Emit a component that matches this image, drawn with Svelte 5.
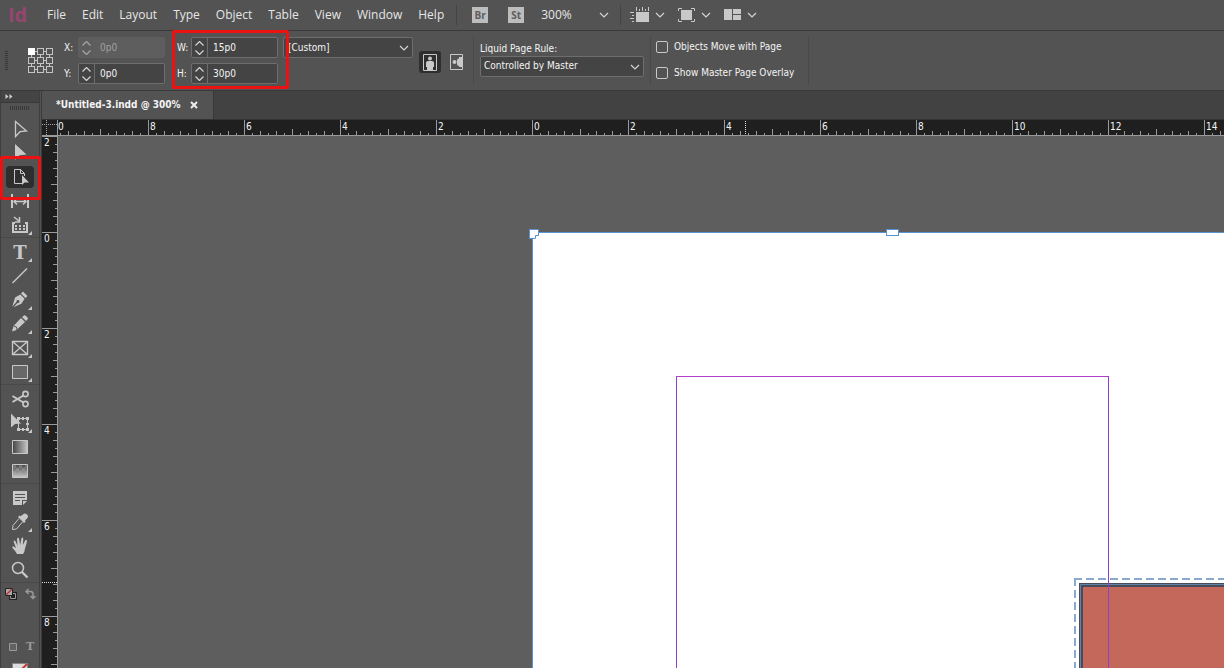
<script>
  const menus = ['File', 'Edit', 'Layout', 'Type', 'Object', 'Table', 'View', 'Window', 'Help'];
  const toolGroups = [
    [
      { id: 'select', name: 'Selection Tool' },
      { id: 'direct', name: 'Direct Selection Tool' },
      { id: 'page', name: 'Page Tool' },
      { id: 'gap', name: 'Gap Tool' },
      { id: 'collect', name: 'Content Collector Tool', more: true }
    ],
    [
      { id: 'type', name: 'Type Tool', more: true },
      { id: 'line', name: 'Line Tool' },
      { id: 'pen', name: 'Pen Tool', more: true },
      { id: 'pencil', name: 'Pencil Tool', more: true },
      { id: 'frame', name: 'Rectangle Frame Tool', more: true },
      { id: 'rect', name: 'Rectangle Tool', more: true }
    ],
    [
      { id: 'scissors', name: 'Scissors Tool' },
      { id: 'transform', name: 'Free Transform Tool', more: true },
      { id: 'gradient', name: 'Gradient Swatch Tool' },
      { id: 'feather', name: 'Gradient Feather Tool' }
    ],
    [
      { id: 'note', name: 'Note Tool' },
      { id: 'dropper', name: 'Eyedropper Tool', more: true },
      { id: 'hand', name: 'Hand Tool' },
      { id: 'zoom', name: 'Zoom Tool' }
    ]
  ];
  let active = $state('page');
  let objectsMove = $state(false);
  let overlay = $state(false);
  let winW = $state(1224);
  let winH = $state(668);

  // Ruler: one labelled mark every two picas, only as many as the window shows.
  const step = 96;
  const across = $derived(Array.from({ length: Math.ceil((winW - 148) / step) }, (_, i) => ({ at: 90 + i * step, label: Math.abs(i - 4) * 2 })));
  const down = $derived(Array.from({ length: Math.ceil((winH - 136) / step) }, (_, i) => ({ at: i * step, label: Math.abs(i - 1) * 2 })));
  const ticks = Array.from({ length: 11 }, (_, i) => ({ at: (i + 1) * 8, size: i === 5 ? 6 : i % 2 ? 4 : 2 }));
  const checks = Array.from({ length: 15 }, (_, i) => ({ x: i % 5, y: Math.floor(i / 5) })).filter((c) => (c.x + c.y) % 2 === 0);
</script>

<svelte:window bind:innerWidth={winW} bind:innerHeight={winH} />

{#snippet chevron()}
  <svg class="chev" width="10" height="6" viewBox="0 0 10 6" aria-hidden="true"><path d="M1 1l4 4 4-4" /></svg>
{/snippet}

{#snippet measure(id, label, value, off)}
  <div class="measure">
    <label for={id}>{label}:</label>
    <div class="box" class:off>
      <div class="spin">
        <button aria-label="Increase {label}" disabled={off}><svg width="9" height="5" viewBox="0 0 9 5"><path d="M.5 4.5l4-4 4 4" /></svg></button>
        <button aria-label="Decrease {label}" disabled={off}><svg width="9" height="5" viewBox="0 0 9 5"><path d="M.5 .5l4 4 4-4" /></svg></button>
      </div>
      <input {id} type="text" {value} disabled={off} />
    </div>
  </div>
{/snippet}

<div class="app">
  <header class="menubar">
    <span class="logo">Id</span>
    <nav>
      {#each menus as m}<button>{m}</button>{/each}
    </nav>
    <span class="rule"></span>
    <button class="badge">Br</button>
    <button class="badge">St</button>
    <button class="zoom"><span>300%</span>{@render chevron()}</button>
    <span class="rule"></span>
    <button class="view" aria-label="View options">
      <svg width="19" height="16" viewBox="0 0 19 16"><path fill="#c8c8c8" d="M6 5h13v10H6z" /><path stroke="#c8c8c8" d="M6.5 0v4M9.5 2v2M12.500 0v4M15.500 2v2M18.500 0v4M0 5.500h4M2 8.500h2M0 11.500h4M2 14.500h2" /></svg>
      {@render chevron()}
    </button>
    <button class="view" aria-label="Screen mode">
      <svg width="17" height="16" viewBox="0 0 17 16"><path fill="#c8c8c8" d="M3 3h11v10H3z" /><path fill="none" stroke="#c8c8c8" d="M.5 4V1.500H4M13 1.500h3.500V4M16.500 12v2.500H13M4 14.500H.5V12" /></svg>
      {@render chevron()}
    </button>
    <button class="view" aria-label="Arrange documents">
      <svg width="17" height="16" viewBox="0 0 17 16"><path fill="#c8c8c8" d="M0 2h8v11H0zM9 2h8v5H9zM9 8h8v5H9z" /></svg>
      {@render chevron()}
    </button>
  </header>

  <section class="control" aria-label="Control panel">
    <span class="grip"></span>
    <svg class="anchor" width="26" height="26" viewBox="0 0 26 26" role="img" aria-label="Reference point">
      <path d="M3.500 3.500h18v18h-18zM3.500 12.500h18M12.500 3.500v18" fill="none" stroke="#c4c4c4" />
      {#each [0, 9, 18] as y}{#each [0, 9, 18] as x}
        <rect x={x + 0.5} y={y + 0.5} width="6" height="6" fill={x + y === 0 ? '#fff' : '#535353'} stroke={x + y === 0 ? '#fff' : '#c4c4c4'} />
      {/each}{/each}
    </svg>
    <div class="pair">
      {@render measure('fx', 'X', '0p0', true)}
      {@render measure('fy', 'Y', '0p0', false)}
    </div>
    <div class="pair size">
      {@render measure('fw', 'W', '15p0', false)}
      {@render measure('fh', 'H', '30p0', false)}
      <span class="mark mark-size"></span>
    </div>
    <div class="pick preset">
      <select aria-label="Page size"><option>[Custom]</option></select>
      {@render chevron()}
    </div>
    <div class="orient">
      <button class="on" aria-label="Portrait">
        <svg width="14" height="17" viewBox="0 0 14 17"><path fill="none" stroke="#c8c8c8" d="M.5.5h13v16H.5z" /><circle cx="7" cy="4.500" r="2" fill="#c8c8c8" /><path fill="#c8c8c8" d="M3 9q0-2 2-2h4q2 0 2 2v4h-1v3H4v-3H3z" /></svg>
      </button>
      <button aria-label="Landscape">
        <svg width="14" height="17" viewBox="0 0 14 17"><path fill="none" stroke="#c8c8c8" d="M.5.5h12v15H.5z" /><circle cx="4.500" cy="8" r="2" fill="#c8c8c8" /><path fill="#c8c8c8" d="M13 3v10H9v-1q-2 0-2-2V6.500q0-2 2-2V3z" /></svg>
      </button>
    </div>
    <span class="rule tall"></span>
    <div class="liquid">
      <label for="liquid">Liquid Page Rule:</label>
      <div class="pick">
        <select id="liquid"><option>Controlled by Master</option></select>
        {@render chevron()}
      </div>
    </div>
    <span class="rule tall"></span>
    <div class="options">
      <label><input type="checkbox" bind:checked={objectsMove} />Objects Move with Page</label>
      <label><input type="checkbox" bind:checked={overlay} />Show Master Page Overlay</label>
    </div>
    <span class="rule tall"></span>
  </section>

  <div class="work">
    <aside class="tools">
      <button class="expand" aria-label="Expand tools"><svg width="8" height="6" viewBox="0 0 8 6"><path d="M.5 0l3 2.500-3 2.500zM4.500 0l3 2.500-3 2.500z" fill="#d0d0d0" /></svg></button>
      <span class="handle"></span>
      {#each toolGroups as group}
        <div class="group">
          {#each group as t}
            <button class="tool" class:active={active === t.id} aria-label={t.name} onclick={() => (active = t.id)}>
              <svg width="28" height="24" viewBox="0 0 28 24">
                {#if t.id === 'select'}
                  <path class="s" stroke-width="1.300" d="M9.500 4.500v15l4.500-4.800 6.500-.7z" />
                {:else if t.id === 'direct'}
                  <path d="M9 3v16l4.500-4.800 7-.7z" />
                {:else if t.id === 'page'}
                  <path class="s" d="M16 18.500H8.500v-14h6l4 4V11M14.500 4.500v4h4" /><path d="M16 10v10l2.500-2.500H23z" />
                {:else if t.id === 'gap'}
                  <path class="s w" d="M6 5v14M22 5v14" /><path class="s" stroke-width="1.500" d="M8 12.500h12M11 9.500l-3 3 3 3M17 9.500l3 3-3 3" />
                {:else if t.id === 'collect'}
                  <path class="s w" d="M9 10H7v9h14v-9h-2" /><path class="s" stroke-width="1.500" d="M8 4l5 4M13.500 4v5H9" /><path d="M9 12h2v2H9zM13 12h2v2h-2zM17 12h2v2h-2zM9 15h2v2H9zM13 15h2v2h-2zM17 15h2v2h-2z" />
                {:else if t.id === 'type'}
                  <text x="14" y="19" text-anchor="middle" class="glyph">T</text>
                {:else if t.id === 'line'}
                  <path class="s" stroke-width="1.500" d="M6.500 19L21 4.500" />
                {:else if t.id === 'pen'}
                  <path d="M17 3.500l4.500 4.500-2 2L15 5.500zM14.300 6.500l4.300 4.300-3.200 5L7.500 19.200l4-4.200a1.500 1.500 0 1 0-1-1L6.300 18.500l2.800-9z" />
                {:else if t.id === 'pencil'}
                  <path d="M18 3.500q1-.5 2 .5l1.500 1.500q1 1 0 2L20 9l-4-4zM15 6l4 4-8.500 8L6 19.500 7.500 14z" /><path class="cut" d="M7.500 14l3 1 .5 3" />
                {:else if t.id === 'frame'}
                  <path class="s" stroke-width="1.300" d="M6.500 5.500h15v13h-15zM6.500 5.500l15 13M21.500 5.500l-15 13" />
                {:else if t.id === 'rect'}
                  <path class="s" style:fill="#686868" d="M6.500 5.500h15v13h-15z" />
                {:else if t.id === 'scissors'}
                  <g class="s" stroke-width="1.600"><circle cx="19.500" cy="7" r="2.600" /><circle cx="19.500" cy="17" r="2.600" /><path stroke-width="2" d="M17.500 8.500L6.500 15M17.500 15.500L6.500 9" /></g>
                {:else if t.id === 'transform'}
                  <path class="s" d="M12.500 7.500h9v11h-9z" /><path d="M11 6h3v3h-3zM20 6h3v3h-3zM20 17h3v3h-3zM11 17h3v3h-3zM16 6h2v3h-2zM16 17h2v3h-2zM20 12h3v2h-3z" /><path d="M5 2.500v14l4-3.500 6-.5z" />
                {:else if t.id === 'gradient'}
                  <defs><linearGradient id="gs"><stop offset="0" stop-color="#454545" /><stop offset="1" stop-color="#c4c4c4" /></linearGradient></defs>
                  <path class="s" style:fill="url(#gs)" d="M6.500 5.500h15v13h-15z" />
                {:else if t.id === 'feather'}
                  <defs><linearGradient id="gf" x2="0" y2="1"><stop offset="0" stop-color="#484848" /><stop offset="1" stop-color="#c8c8c8" /></linearGradient></defs>
                  <path class="s" style:fill="url(#gf)" d="M6.500 5.500h15v13h-15z" />
                  {#each checks as c}<rect x={7 + c.x * 3} y={6 + c.y * 3} width="3" height="3" fill="#aaa" opacity=".35" />{/each}
                {:else if t.id === 'note'}
                  <path d="M7 5h14v9h-5v5H7zM17 15h4l-4 4z" /><path class="cut" d="M9 8.500h10M9 11.500h10M9 14.500h5" />
                {:else if t.id === 'dropper'}
                  <path d="M17 4.500q2-2 4 0t0 4l-2 2 .7 1-1.700 1.500-6-6L13.500 5.500l1 .8z" /><path class="s" d="M13 8.500l-6 7-.5 4 4-.5 6-7" />
                {:else if t.id === 'hand'}
                  <path d="M11 20q-1.500-3-4.500-6-.8-1.500.8-1.700L10 14 7.500 7.500q.5-1.500 1.800-.5l2.200 4.500-.5-7q1-1.500 2 0l1.200 6.500L15.500 4q1.200-1 1.800.5L16.800 11l2.700-5q1.500-.5 1.500 1-.5 3-2 7.500-.3 3.500-2 5.500z" />
                {:else if t.id === 'zoom'}
                  <circle class="s" stroke-width="1.500" cx="12" cy="10" r="5.500" /><path class="s" stroke-width="2.400" d="M16 14l5.500 5.500" />
                {/if}
                {#if t.more}<path d="M26 18v4h-4z" />{/if}
              </svg>
            </button>
          {/each}
        </div>
      {/each}
      <div class="swatches">
        <button aria-label="Default fill and stroke"><svg width="12" height="12" viewBox="0 0 12 12"><path fill="#222" d="M4 4h8v8H4z" /><path fill="none" stroke="#999" d="M5.500 5.500h5v5h-5z" /><path fill="#aaa" stroke="#222" d="M.5.5h7v7h-7z" /><path stroke="#b33" stroke-width="1.500" d="M1 7l6-6" /></svg></button>
        <button aria-label="Swap fill and stroke"><svg width="12" height="12" viewBox="0 0 12 12"><path fill="none" stroke="#999" stroke-width="1.500" d="M2 3.500h3.500q2.500 0 2.500 2.500v4M3.500 1L1 3.500 3.500 6M5.500 8L8 10.500 10.500 8" /></svg></button>
      </div>
      <div class="format">
        <button aria-label="Formatting affects container"><svg width="9" height="9" viewBox="0 0 9 9"><path fill="#626262" stroke="#999" d="M.5.5h7v7h-7z" /></svg></button>
        <button class="tiny">T</button>
      </div>
      <button class="none" aria-label="Apply none"><svg width="16" height="14" viewBox="0 0 16 14"><path fill="#ddd" stroke="#888" d="M.5.5h15v13H.5z" /><path stroke="#c33" stroke-width="2" d="M3 13L15 1" /></svg></button>
      <span class="mark mark-tool"></span>
    </aside>

    <main class="doc">
      <div class="tabs">
        <div class="tab"><span>*Untitled-3.indd @ 300%</span><button aria-label="Close document"><svg width="8" height="8" viewBox="0 0 8 8"><path stroke="#eee" stroke-width="2" d="M1 1l6 6M7 1L1 7" /></svg></button></div>
      </div>
      <div class="sheet">
        <svg class="corner" viewBox="0 0 16 16" width="16" height="16"><path stroke="#aaa" stroke-dasharray="1 1" d="M0 4.500h15M4.500 0v15" /><path stroke="#999" d="M0 15.500h16M15.500 0v16" /></svg>
        <svg class="ruler" width="100%" height="16">
          {#each ticks as t}<path stroke="#9a9a9a" d="M{t.at - 5.5} {15 - t.size}v{t.size}" />{/each}
          <text x="0" y="10">0</text>
          {#each across as m}
            <path stroke="#9a9a9a" d="M{m.at + 0.5} 0v16" />
            {#each ticks as t}<path stroke="#9a9a9a" d="M{m.at + t.at + 0.5} {15 - t.size}v{t.size}" />{/each}
            <text x={m.at + 2} y="10">{m.label}</text>
          {/each}
          <path stroke="#ddd" stroke-dasharray="1 1" d="M687.500 1v14" />
          <line stroke="#9a9a9a" x1="0" y1="15.500" x2="100%" y2="15.500" />
        </svg>
        <svg class="ruler" width="16" height="100%">
          {#each down as m}
            <path stroke="#9a9a9a" d="M0 {m.at + 0.5}h16" />
            {#each ticks as t}<path stroke="#9a9a9a" d="M{15 - t.size} {m.at + t.at + 0.5}h{t.size}" />{/each}
            <text x="2" y={m.at + 10}>{m.label}</text>
          {/each}
          <path stroke="#ddd" stroke-dasharray="1 1" d="M0 446.500h15" />
          <line stroke="#9a9a9a" x1="15.500" y1="0" x2="15.500" y2="100%" />
        </svg>
        <svg class="canvas" width="100%" height="100%" role="img" aria-label="Page canvas">
          <rect x="474.500" y="96.500" width="720" height="1440" fill="#fff" stroke="#5a92d4" />
          <path fill="#c4685c" d="M1024 450h400v800h-400z" />
          <path fill="none" stroke="#484c5a" stroke-width="4" d="M1023 1250V449h400" />
          <path fill="none" stroke="#6485aa" d="M1022.500 1250V448.500h400" />
          <path fill="none" stroke="#88aad2" stroke-width="2" stroke-dasharray="8 4" d="M1016 443h400M1017 442v800" />
          <path fill="none" stroke="#9040c8" d="M618.500 1400V240.500h432V1400" />
          <path stroke="#b040c8" d="M618 240.500h433" />
          <path fill="#fff" stroke="#5a92d4" d="M471.500 93.500h9v6h-3v3h-6z" />
          <rect x="828.500" y="93.500" width="12" height="6" fill="#fff" stroke="#5a92d4" />
        </svg>
      </div>
    </main>
  </div>
</div>

<style>
  :global(body) { margin: 0; background: #535353; }
  .app {
    height: 100vh; display: flex; flex-direction: column; overflow: hidden;
    background: #535353; color: #f4f4f4; font: 10px/14px "DejaVu Sans Condensed", "Open Sans", sans-serif;
  }
  button, input, select { font: inherit; color: inherit; margin: 0; padding: 0; border: 0; background: none; border-radius: 0; }
  button { display: flex; align-items: center; justify-content: center; }
  svg { display: block; flex: none; }
  .chev path, .spin path { fill: none; stroke: #d4d4d4; stroke-width: 1.2; }

  .menubar { flex: none; height: 30px; display: flex; align-items: center; border-bottom: 1px solid #393939; font: 12px/16px "Open Sans", sans-serif; color: #e6e6e6; }
  .logo { width: 30px; padding-left: 8px; box-sizing: border-box; font: 700 20px/24px "Open Sans", sans-serif; color: #96466e; }
  nav { display: flex; gap: 16px; padding: 0 12px 0 17px; }
  .rule { width: 1px; height: 20px; background: #434343; flex: none; }
  .badge { width: 16px; height: 16px; margin-left: 15px; background: #bdbdbd; color: #5c5c5c; font: 700 10px/16px "Open Sans", sans-serif; }
  .badge + .badge { margin-left: 20px; }
  .zoom { width: 68px; margin: 0 11px 0 17px; justify-content: space-between; }
  .view { gap: 6px; margin-left: 9px; }
  .view + .view { margin-left: 13px; }

  .control { flex: none; height: 59px; display: flex; align-items: center; border-bottom: 1px solid #393939; }
  .grip { width: 3px; height: 20px; margin: 0 20px 0 5px; background: repeating-linear-gradient(#383838 0 1px, transparent 1px 2px); flex: none; }
  .anchor { margin-right: 10px; }
  .pair { display: flex; flex-direction: column; gap: 5px; position: relative; }
  .size { margin-left: 12px; }
  .measure { display: flex; align-items: center; }
  .measure label { width: 14px; }
  .box { display: flex; width: 85px; height: 19px; border: 1px solid #6e6e6e; border-radius: 2px; background: #444; overflow: hidden; }
  .spin { width: 15px; border-right: 1px solid #6e6e6e; display: flex; flex-direction: column; align-items: center; justify-content: center; gap: 4px; }
  .box input { flex: 1; min-width: 0; padding-left: 5px; }
  .off { background: #5e5e5e; border-color: #5e5e5e; color: #a0a0a0; }
  .off .spin { border-color: transparent; opacity: .6; }
  .pick { position: relative; }
  .pick select { appearance: none; box-sizing: border-box; display: block; width: 100%; height: 21px; padding: 0 20px 0 3px; border: 1px solid #6e6e6e; border-radius: 2px; background: #444; }
  .pick .chev { position: absolute; right: 4px; top: 8px; pointer-events: none; }
  .preset { width: 130px; margin: 0 6px 26px 5px; }
  .preset select { padding-left: 4px; }
  .orient { display: flex; gap: 5px; padding-top: 3px; margin-right: 5px; }
  .orient button { width: 22px; height: 22px; border-radius: 3px; }
  .orient .on { background: #2e2e2e; }
  .tall { height: 48px; background: #494949; }
  .liquid { width: 164px; margin: 0 6px 4px 6px; }
  .liquid label { display: block; height: 15px; line-height: 15px; }
  .options { display: flex; flex-direction: column; gap: 12px; margin: 0 14px 2px 5px; }
  .options label { display: flex; align-items: center; gap: 6px; }
  .options input { appearance: none; box-sizing: border-box; width: 12px; height: 12px; border: 1px solid #c8c8c8; border-radius: 2px; }
  .options input:checked { background: #c8c8c8; }

  .work { flex: 1; min-height: 0; display: flex; }
  .tools { position: relative; box-sizing: border-box; width: 42px; flex: none; border-left: 1px solid #3f3f3f; border-right: 1px solid #3a3a3a; box-shadow: inset -1px 0 #535353, inset -2px 0 #3f3f3f; }
  .expand { box-sizing: border-box; width: 38px; height: 12px; justify-content: flex-start; padding-left: 4px; background: #444; border-bottom: 1px solid #393939; }
  .handle { display: block; width: 20px; height: 4px; margin: 3px 0 7px 9px; background: repeating-linear-gradient(90deg, #393939 0 1px, transparent 1px 2px); }
  .group { padding: 0 5px; margin-bottom: 2px; border-bottom: 1px solid #494949; width: 28px; }
  .tool { width: 28px; height: 24px; }
  .tool.active { background: #2e2e2e; border-radius: 4px; height: 22px; margin: 1px 0; }
  .tool path, .tool text { fill: #c8c8c8; }
  .tool .cut { fill: none; stroke: #535353; }
  .tool .s, .tool .s path { fill: none; stroke: #c8c8c8; }
  .tool .w { stroke-width: 2; }
  .glyph { font: 700 18px "DejaVu Serif", serif; }
  .swatches { display: flex; gap: 8px; padding: 3px 4px; }
  .format { display: flex; gap: 8px; padding: 37px 8px 0; }
  .tiny { font: 700 11px/14px "DejaVu Serif", serif; color: #999; }
  .none { margin: 9px 0 0 11px; }

  .doc { flex: 1; min-width: 0; display: flex; flex-direction: column; }
  .tabs { flex: none; height: 28px; display: flex; background: #424242; border-bottom: 1px solid #333; }
  .tab { display: flex; align-items: center; gap: 9px; padding: 0 15px 0 14px; background: #535353; border-right: 1px solid #393939; font-weight: 700; }
  .sheet { flex: 1; min-height: 0; display: grid; grid-template: 16px minmax(0, 1fr) / 16px minmax(0, 1fr); background: #5e5e5e; }
  .corner, .ruler { background: #1f1f1f; }
  .ruler { overflow: visible; }
  .ruler text { fill: #f4f4f4; font: 10px "DejaVu Sans Condensed", "Noto Sans", sans-serif; }
  .canvas { overflow: hidden; min-width: 0; }

  .mark { position: absolute; box-sizing: border-box; border: 3px solid #ee1111; border-radius: 2px; pointer-events: none; z-index: 2; }
  .mark-size { left: -5px; right: -11px; top: -7px; bottom: -5px; }
  .mark-tool { left: -1px; width: 41px; top: 65px; height: 44px; }
</style>
